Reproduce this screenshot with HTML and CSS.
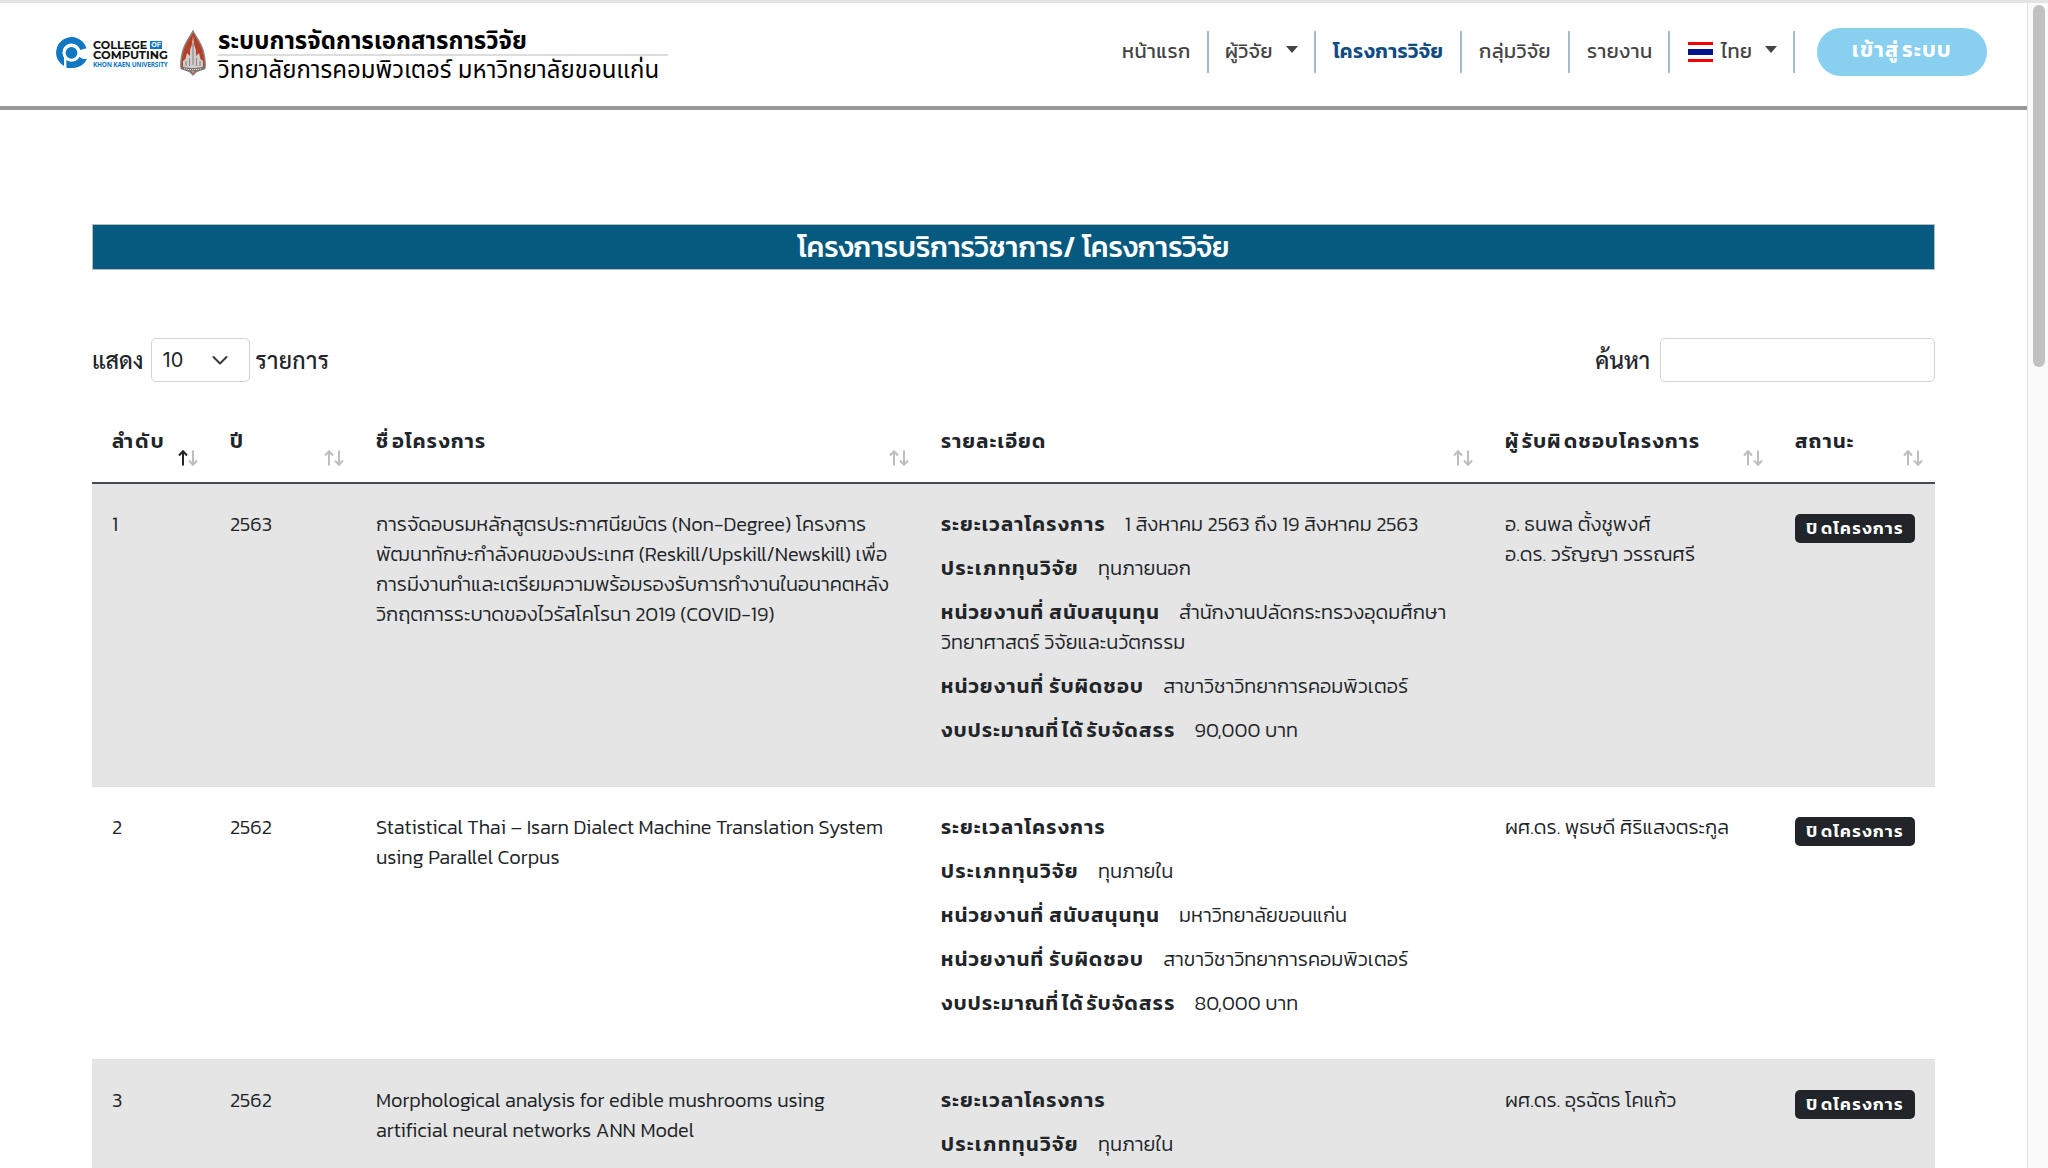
FILE: index.html
```html
<!DOCTYPE html>
<html lang="th">
<head>
<meta charset="utf-8">
<title>โครงการวิจัย</title>
<link rel="stylesheet" href="styles.css">
</head>
<body>
<svg class="defs" width="0" height="0">
  <symbol id="sort" viewBox="0 0 20 16">
    <path class="up" d="M5 15.5V1.5M1 5.5L5 1.2L9 5.5"/>
    <path class="down" d="M15 .5V14.5M11 10.5L15 14.8L19 10.5"/>
  </symbol>
</svg>
<div class="viewport">
  <div class="page">
    <header class="navbar">
      <div class="brand">
        <svg class="logo" viewBox="0 0 34 32" width="34" height="32">
          <path d="M28.300 12.200A12.200 12.200 0 1 0 27.200 21.500" fill="none" stroke="#1077c3" stroke-width="6.500"/>
          <path d="M11.500 22V31H17.500C24 31 29.500 27.500 31.800 22H24C22 25 19 25.500 11.500 22Z" fill="#1077c3"/>
          <path d="M10.200 16V32" stroke="#fff" stroke-width="2.400"/>
          <circle cx="16.500" cy="15.800" r="7.400" fill="#1077c3" stroke="#fff" stroke-width="3"/>
        </svg>
        <div class="college">
          <div class="row1">COLLEGE <span class="of">OF</span></div>
          <div class="row2">COMPUTING</div>
          <div class="row3">KHON KAEN UNIVERSITY</div>
        </div>
        <svg class="emblem" viewBox="0 0 28 46" width="28" height="46">
          <path d="M14 1C17 7 22.500 13 24.500 22c1.500 6 2.200 10 1.500 16l-8.500 3.500L14 45l-3.500-3.500L2 38c-.7-6 0-10 1.500-16C5.500 13 11 7 14 1Z" fill="#b3412a" stroke="#8d8684" stroke-width="1.400"/>
          <path d="M14 6l1.200 9 1.800 5v6l3-3 1.500 6 2.500 2v6l-7 3-3 3-3-3-7-3v-6l2.500-2L8 23l3 3v-6l1.800-5Z" fill="#d0cccb"/>
          <path d="M14 13v22M10.500 28v8M17.500 28v8M7 31v5M21 31v5" stroke="#77706e" stroke-width=".8"/>
          <path d="M2 36c4 1.500 8 2 12 2s8-.5 12-2v3c-3 1.500-7 2.500-12 2.500S5 40.500 2 39Z" fill="#77706e"/>
          <path d="M5 38.600c6 1.400 12 1.400 18 0" fill="none" stroke="#eee" stroke-width="1" stroke-dasharray="1.200 .8"/>
        </svg>
        <div class="system">
          <div class="system-name">ระบบการจัดการเอกสารการวิจัย</div>
          <div class="system-sub">วิทยาลัยการคอมพิวเตอร์ มหาวิทยาลัยขอนแก่น</div>
        </div>
      </div>
      <nav class="menu">
        <a class="item home">หน้าแรก</a>
        <a class="item people">ผู้วิจัย<i class="caret"></i></a>
        <a class="item active">โครงการวิจัย</a>
        <a class="item group">กลุ่มวิจัย</a>
        <a class="item report">รายงาน</a>
        <a class="item lang"><span class="flag"></span>ไทย<i class="caret"></i></a>
      </nav>
      <a class="login">เข้าสู่<i class="gap"></i>ระบบ</a>
    </header>

    <main>
      <h1>โครงการบริการวิชาการ/ โครงการวิจัย</h1>
      <div class="controls">
        <div class="length"><span>แสดง</span>
          <span class="select">10<svg width="16" height="16" viewBox="0 0 16 16"><path d="M1.500 5l6.500 6.500L14.500 5" fill="none" stroke="#343a40" stroke-width="2" stroke-linecap="round" stroke-linejoin="round"/></svg></span>
          <span class="unit">รายการ</span></div>
        <label class="search"><span>ค้นหา</span><input type="text"></label>
      </div>

      <div class="table">
        <div class="tr head">
          <div class="th sorted"><span class="wide">ลำดับ</span><svg class="sort"><use href="#sort"/></svg></div>
          <div class="th">ปี<svg class="sort"><use href="#sort"/></svg></div>
          <div class="th"><span>ชื่<i class="gap"></i>อโครงการ</span><svg class="sort"><use href="#sort"/></svg></div>
          <div class="th">รายละเอียด<svg class="sort"><use href="#sort"/></svg></div>
          <div class="th"><span>ผู้<i class="gap"></i>รับผิ<i class="gap"></i>ดชอบโครงการ</span><svg class="sort"><use href="#sort"/></svg></div>
          <div class="th">สถานะ<svg class="sort"><use href="#sort"/></svg></div>
        </div>
        <div class="tr odd">
          <div>1</div>
          <div>2563</div>
          <div class="name">การจัดอบรมหลักสูตรประกาศนียบัตร (Non-Degree) โครงการ<br>พัฒนาทักษะกำลังคนของประเทศ (Reskill/Upskill/Newskill) เพื่อ<br>การมีงานทำและเตรียมความพร้อมรองรับการทำงานในอนาคตหลัง<br>วิกฤตการระบาดของไวรัสโคโรนา 2019 (COVID-19)</div>
          <div>
            <p><b>ระยะเวลาโครงการ</b>1 สิงหาคม 2563 ถึง 19 สิงหาคม 2563</p>
            <p><b class="type">ประเภททุนวิจัย</b>ทุนภายนอก</p>
            <p><b>หน่วยงานที่<i class="gap big"></i>สนับสนุนทุน</b>สำนักงานปลัดกระทรวงอุดมศึกษา<br>วิทยาศาสตร์ วิจัยและนวัตกรรม</p>
            <p><b>หน่วยงานที่<i class="gap big"></i>รับผิดชอบ</b>สาขาวิชาวิทยาการคอมพิวเตอร์</p>
            <p><b>งบประมาณที่<i class="gap"></i>ได้<i class="gap"></i>รับจัดสรร</b>90,000 บาท</p>
          </div>
          <div>อ. ธนพล ตั้งชูพงศ์<br>อ.ดร. วรัญญา วรรณศรี</div>
          <div><span class="badge">ปิ<i class="gap"></i>ดโครงการ</span></div>
        </div>
        <div class="tr">
          <div>2</div>
          <div>2562</div>
          <div class="name">Statistical Thai – Isarn Dialect Machine Translation System<br>using Parallel Corpus</div>
          <div>
            <p><b>ระยะเวลาโครงการ</b></p>
            <p><b class="type">ประเภททุนวิจัย</b>ทุนภายใน</p>
            <p><b>หน่วยงานที่<i class="gap big"></i>สนับสนุนทุน</b>มหาวิทยาลัยขอนแก่น</p>
            <p><b>หน่วยงานที่<i class="gap big"></i>รับผิดชอบ</b>สาขาวิชาวิทยาการคอมพิวเตอร์</p>
            <p><b>งบประมาณที่<i class="gap"></i>ได้<i class="gap"></i>รับจัดสรร</b>80,000 บาท</p>
          </div>
          <div>ผศ.ดร. พุธษดี ศิริแสงตระกูล</div>
          <div><span class="badge">ปิ<i class="gap"></i>ดโครงการ</span></div>
        </div>
        <div class="tr odd">
          <div>3</div>
          <div>2562</div>
          <div class="name">Morphological analysis for edible mushrooms using<br>artificial neural networks ANN Model</div>
          <div>
            <p><b>ระยะเวลาโครงการ</b></p>
            <p><b class="type">ประเภททุนวิจัย</b>ทุนภายใน</p>
          </div>
          <div>ผศ.ดร. อุรฉัตร โคแก้ว</div>
          <div><span class="badge">ปิ<i class="gap"></i>ดโครงการ</span></div>
        </div>
      </div>
    </main>
  </div>
  <div class="scrollbar"><div class="thumb"></div></div>
</div>
</body>
</html>
```
FILE: styles.css
```css
* { box-sizing: border-box; }
body {
  margin: 0;
  background: #fff;
  color: #212529;
  font: 300 20px/30px Kanit, "Noto Sans Thai", "Noto Sans", sans-serif;
  overflow: hidden;
}
.defs { display: block; height: 0; }
.viewport {
  display: flex;
  height: 1168px;
  overflow: hidden;
  border-top: 3px solid #e4e4e4;
}
.page { flex: 1; min-width: 0; overflow: hidden; }
.scrollbar {
  width: 21px;
  flex: none;
  padding: 2px 4px 0 5px;
  background: #fafafa;
  border-left: 1px solid #e3e3e3;
}
.thumb { width: 12px; height: 362px; border-radius: 6px; background: #c1c1c1; }

/* extra room after a stacked vowel or tone mark in letter-spaced text */
.gap { display: inline-block; width: 2.500px; }
.big { width: 5px; }

/* top bar */
.navbar {
  display: flex;
  align-items: flex-start;
  height: 107px;
  padding: 0 40px 0 55px;
  border-bottom: 4px solid #999;
}
.brand { display: flex; flex: 1; }
.logo { margin-top: 34px; }
.college {
  width: 80px;
  margin: 37px 0 0 4px;
  font: 700 11.500px/10px Montserrat, Inter, sans-serif;
  color: #111;
  white-space: nowrap;
}
.row1 { display: flex; gap: 3px; font-size: 11.200px; }
.of {
  height: 8px;
  margin-top: 1px;
  padding: 0 1px;
  background: #1077c3;
  color: #fff;
  font-size: 6.500px;
  line-height: 8px;
}
.row3 { color: #1077c3; font: 700 6.400px/9px "Open Sans", sans-serif; letter-spacing: -.15px; }
.emblem { margin: 27px 0 0 6px; }
.system {
  margin: 21px 0 0 11px;
  font: 400 24px/36px "Noto Sans Thai", sans-serif;
  color: #000;
  white-space: nowrap;
}
.system-name { width: 450px; height: 32px; border-bottom: 2px solid #ddd; font-weight: 700; }
.system-sub { line-height: 30px; }
.menu { display: flex; margin-top: 28px; }
.item {
  display: flex;
  align-items: center;
  height: 42px;
  padding-left: 17px;
  border-right: 2px solid #a3bccb;
  color: #444;
  font-weight: 400;
  letter-spacing: .4px;
  white-space: nowrap;
  line-height: 38px;
  padding-bottom: 2px;
}
.home { width: 104px; }
.people { width: 107px; padding-left: 16px; }
.active { width: 146px; color: #0f4c81; font-weight: 600; }
.group { width: 108px; }
.report { width: 100px; }
.lang { width: 125px; padding-left: 18px; }
.caret {
  margin: -4px 0 0 13px;
  border: 6px solid transparent;
  border-top: 7px solid #444;
  border-bottom: 0;
}
.flag {
  width: 25px;
  height: 20px;
  margin: 2px 8px 0 0;
  background: linear-gradient(#ef0000 0 3px, #fff 3px 7px, #00148f 7px 13px, #fff 13px 17px, #ef0000 17px);
}
.login {
  width: 170px;
  height: 48px;
  margin: 25px 0 0 22px;
  border-radius: 24px;
  background: #89cff0;
  color: #fff;
  font-size: 21px;
  font-weight: 600;
  line-height: 44px;
  letter-spacing: 1.400px;
  text-align: center;
}

/* content */
main { padding: 114px 92px 0; }
h1 {
  height: 46px;
  margin: 0;
  border: 1px solid #b5bcc0;
  background: #065a7f;
  color: #fff;
  font-size: 28.400px;
  font-weight: 500;
  line-height: 44px;
  text-align: center;
}
.controls { display: flex; justify-content: space-between; margin-top: 68px; height: 44px; }
.length, .search {
  display: flex;
  align-items: center;
  font-family: Sarabun, "Noto Sans Thai", sans-serif;
  font-size: 23px;
  font-weight: 500;
}
.length > span:not(.select), .search span { padding-bottom: 3px; }
.unit { letter-spacing: .3px; }
.select {
  display: flex;
  align-items: center;
  justify-content: space-between;
  width: 99px;
  height: 44px;
  margin: 0 6px 0 7px;
  padding: 0 21px 0 11px;
  border: 1px solid #ced4da;
  border-radius: 5px;
  font: 400 20px Inter, sans-serif;
}
.search input {
  width: 275px;
  height: 44px;
  margin-left: 10px;
  border: 1px solid #ced4da;
  border-radius: 5px;
  background: #fff;
}

/* table */
.table { margin-top: 30px; }
.tr {
  display: grid;
  grid-template-columns: 118px 146px 565px 564px 290px 1fr;
  padding: 25px 0 27px;
  border-bottom: 1px solid #dee2e6;
  white-space: nowrap;
}
.tr > div { padding: 0 0 0 20px; }
.tr > .th { padding: 14px 12px 0 20px; }
.tr > .name { letter-spacing: -.045px; }
.odd { background: #e5e5e5; }
.head { height: 72px; padding: 0; border-bottom: 2px solid #474c51; }
.th { display: flex; flex-direction: column; font-weight: 600; letter-spacing: 1.300px; }
.wide { letter-spacing: 2.300px; }
.sort {
  align-self: flex-end;
  flex: none;
  width: 20px;
  height: 16px;
  margin-top: -6px;
  fill: none;
  stroke: #bcbec0;
  stroke-width: 2;
}
.sorted .sort { --up: #212529; }
.up { stroke: var(--up, #bcbec0); }
p { margin: 0 0 14px; }
b { margin-right: 19px; font-weight: 600; letter-spacing: 1.300px; }
.type { letter-spacing: 1.600px; }
.badge {
  display: block;
  width: 120px;
  height: 29px;
  margin-top: 5px;
  border-radius: 5px;
  background: #212529;
  color: #fff;
  font-size: 17px;
  font-weight: 600;
  line-height: 28px;
  letter-spacing: 1.300px;
  text-align: center;
}
```
